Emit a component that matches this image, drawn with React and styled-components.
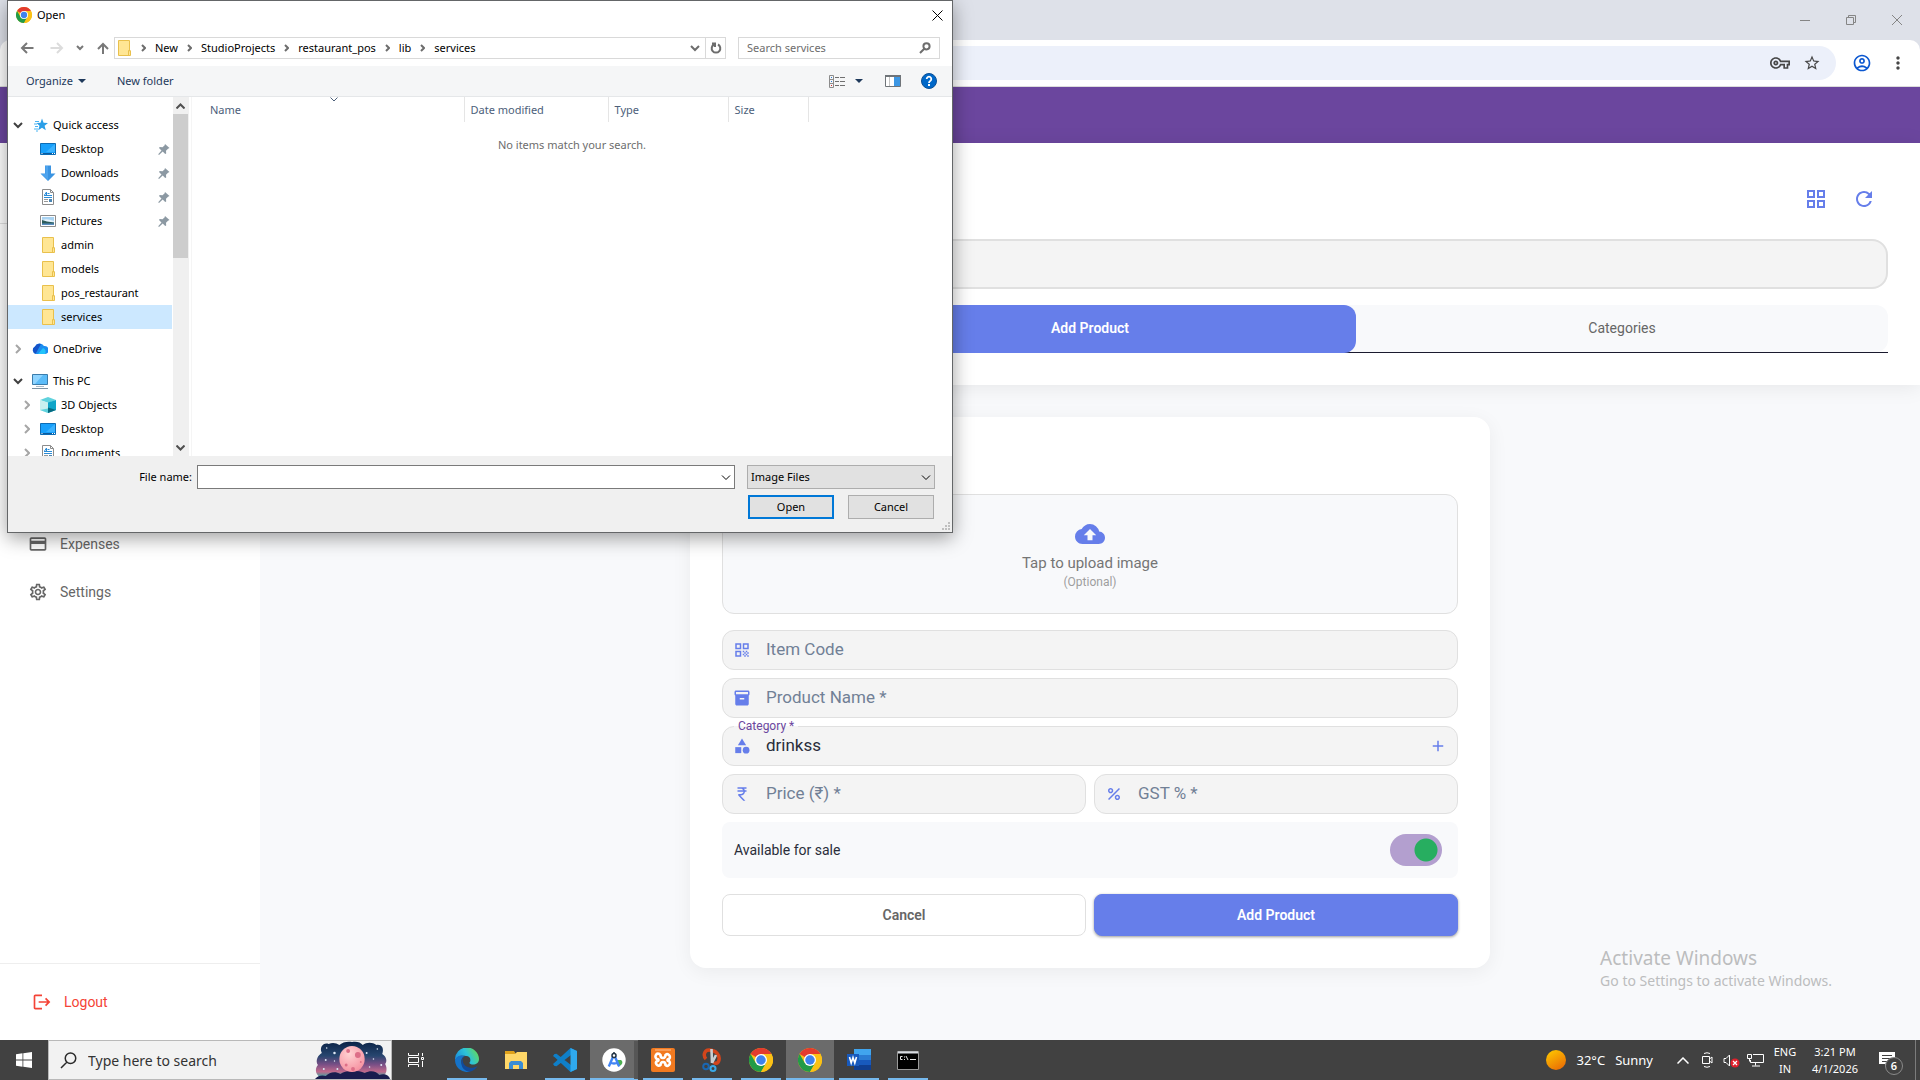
import React, { Component } from "react";
import styled, { createGlobalStyle } from "styled-components";
import {
  MdAdd,
  MdCategory,
  MdCloudUpload,
  MdCurrencyRupee,
  MdInventory2,
  MdLogout,
  MdMoreVert,
  MdOutlineAccountCircle,
  MdOutlineCreditCard,
  MdOutlineGridView,
  MdOutlineSettings,
  MdOutlineVpnKey,
  MdPercent,
  MdQrCode,
  MdRefresh,
  MdStarOutline,
} from "react-icons/md";

const Styles = {
  color: {
    primary: "#667eea",
    purple: "#6b469e",
    page: "#f8f9fb",
    field: "#f4f4f4",
    line: "#e0e0e0",
    muted: "#666666",
    hint: "#718096",
    dark: "#1a1a2e",
    text: "#2a2d3a",
    danger: "#f44336",
    accent: "#76b9ed",
    command: "#1e395b",
  },
  font: {
    app: `Roboto, "Noto Sans", sans-serif`,
    system: `"Noto Sans", "Open Sans", sans-serif`,
  },
};

const GlobalStyle = createGlobalStyle`
  * {
    box-sizing: border-box;
  }
  body {
    margin: 0;
    font-family: ${Styles.font.app};
  }
  button, input, select {
    font: inherit;
    color: inherit;
    margin: 0;
  }
  button {
    padding: 0;
    border: 0;
    background: none;
  }
  svg {
    display: block;
    flex-shrink: 0;
  }
  ul {
    list-style: none;
    margin: 0;
    padding: 0;
  }
`;

const Screen = styled.div`
  position: relative;
  display: flex;
  flex-direction: column;
  min-height: 100vh;
  overflow: hidden;
`;

/* browser */
const TabStrip = styled.div`
  display: flex;
  justify-content: flex-end;
  height: 40px;
  background: #dee1e9;
`;
const WindowButton = styled.button`
  display: flex;
  align-items: center;
  justify-content: center;
  width: 46px;
  height: 40px;
  color: #858585;
`;
const ToolbarBack = styled.div`
  background: #dee1e9;
`;
const BrowserToolbar = styled.div`
  display: flex;
  align-items: center;
  gap: 16px;
  height: 47px;
  padding: 0 12px;
  background: #fff;
  border-bottom: 1px solid #dcdcdc;
  border-radius: 10px 10px 0 0;
`;
const AddressBar = styled.div`
  flex: 1;
  display: flex;
  align-items: center;
  justify-content: flex-end;
  gap: 12px;
  height: 34px;
  padding-right: 14px;
  border-radius: 17px;
  background: #ecf0fa;
`;
const BrowserButton = styled.button`
  display: flex;
  align-items: center;
  justify-content: center;
  width: 20px;
  height: 24px;
  color: ${(props) => props.$color || "#474747"};
`;
const ProfileGroup = styled.div`
  display: flex;
  gap: 16px;
`;

/* pos page */
const AppBar = styled.header`
  height: 56px;
  background: ${Styles.color.purple};
`;
const Body = styled.div`
  flex: 1;
  display: flex;
`;
const Sidebar = styled.aside`
  display: flex;
  flex-direction: column;
  flex: 0 0 260px;
  background: #fff;
`;
const SidebarTop = styled.div`
  height: 81px;
  border-bottom: 1px solid ${Styles.color.line};
`;
const SideNav = styled.nav`
  flex: 1;
  padding: 296px 28px 0;
`;
const SideLink = styled.a`
  display: flex;
  align-items: center;
  gap: 12px;
  height: 48px;
  font-size: 14px;
  text-decoration: none;
  color: ${(props) => (props.$danger ? Styles.color.danger : Styles.color.muted)};
`;
const SidebarFoot = styled.div`
  padding: 14px 32px;
  border-top: 1px solid #eeeeee;
`;
const Main = styled.main`
  flex: 1;
  display: flex;
  flex-direction: column;
  background: ${Styles.color.page};
`;
const PageHeader = styled.section`
  padding: 32px;
  background: #fff;
  box-shadow: 0 2px 20px rgba(0, 0, 0, 0.08);
`;
const HeaderActions = styled.div`
  display: flex;
  justify-content: flex-end;
  gap: 8px;
  height: 64px;
  padding-top: 4px;
  color: ${Styles.color.primary};
`;
const RoundButton = styled.button`
  display: flex;
  align-items: center;
  justify-content: center;
  width: 40px;
  height: 40px;
  margin-right: ${(props) => (props.$last ? "4px" : "0")};
`;
const SearchInput = styled.input`
  display: block;
  width: 100%;
  height: 50px;
  padding: 0 16px;
  border: 2px solid ${Styles.color.line};
  border-radius: 16px;
  background: ${Styles.color.field};
`;
const Tabs = styled.div`
  display: flex;
  height: 48px;
  margin-top: 16px;
  border-radius: 12px 12px 0 0;
  background: linear-gradient(${Styles.color.dark}, ${Styles.color.dark}) bottom / 100% 1px no-repeat;
`;
const TabGroup = styled.div`
  flex: 1;
  display: flex;
  height: 47px;
  border-radius: 12px;
  background: ${Styles.color.page};
`;
const Tab = styled.button`
  flex: 1;
  height: 48px;
  padding-bottom: 2px;
  border-radius: 12px;
  font-size: 14px;
  font-weight: ${(props) => (props.$active ? 600 : 400)};
  color: ${(props) => (props.$active ? "#fff" : Styles.color.muted)};
  background: ${(props) => (props.$active ? Styles.color.primary : "transparent")};
`;
const Card = styled.form`
  align-self: center;
  display: flex;
  flex-direction: column;
  gap: 8px;
  width: 100%;
  max-width: 800px;
  margin: 32px 0;
  padding: 77px 32px 32px;
  border-radius: 16px;
  background: #fff;
  box-shadow: 0 4px 20px rgba(0, 0, 0, 0.06);
`;
const Upload = styled.button`
  display: flex;
  flex-direction: column;
  align-items: center;
  height: 120px;
  margin-bottom: 8px;
  padding-top: 24px;
  border: 1px solid ${Styles.color.line};
  border-radius: 12px;
  background: ${Styles.color.page};
  color: ${Styles.color.primary};
`;
const UploadText = styled.span`
  margin-top: 4px;
  font-size: 15px;
  line-height: 20px;
  color: #757575;
`;
const UploadHint = styled.span`
  font-size: 12px;
  line-height: 18px;
  color: #9e9e9e;
`;
const FieldRow = styled.div`
  display: flex;
  gap: 8px;
`;
const FieldBox = styled.div`
  position: relative;
  flex: 1;
  display: flex;
  align-items: center;
  gap: 15px;
  min-height: 40px;
  padding: 0 10px;
  border: 1px solid ${Styles.color.line};
  border-radius: 12px;
  background: ${Styles.color.field};
  color: ${Styles.color.primary};
`;
const FieldInput = styled.input`
  flex: 1;
  min-width: 0;
  height: 36px;
  padding: 0 0 2px;
  border: 0;
  outline: 0;
  background: transparent;
  font-size: 17px;
  color: ${Styles.color.text};
  &::placeholder {
    color: ${Styles.color.hint};
    opacity: 1;
  }
`;
const FieldSelect = styled(FieldInput)`
  appearance: none;
`;
const FloatingLabel = styled.label`
  position: absolute;
  top: -9px;
  left: 11px;
  padding: 0 4px;
  font-size: 12px;
  line-height: 16px;
  color: ${Styles.color.purple};
  background: linear-gradient(#fff 50%, ${Styles.color.field} 50%);
`;
const SwitchRow = styled.label`
  display: flex;
  align-items: center;
  justify-content: space-between;
  height: 56px;
  padding: 0 16px 0 12px;
  border-radius: 8px;
  font-size: 14px;
  color: ${Styles.color.text};
  background: ${Styles.color.page};
`;
const Switch = styled.input`
  appearance: none;
  width: 52px;
  height: 32px;
  border-radius: 16px;
  background: radial-gradient(circle at 36px 16px, #27ae60 11px, transparent 12px) #b39fcf;
`;
const FormButton = styled.button`
  flex: 1 0 0;
  height: 42px;
  border-radius: 8px;
  border: 1px solid ${(props) => (props.$primary ? Styles.color.primary : Styles.color.line)};
  font-size: 14px;
  font-weight: 600;
  color: ${(props) => (props.$primary ? "#fff" : Styles.color.muted)};
  background: ${(props) => (props.$primary ? Styles.color.primary : "#fff")};
  box-shadow: ${(props) => (props.$primary ? "0 1px 3px rgba(0, 0, 0, 0.4)" : "none")};
`;
const FormActions = styled(FieldRow)`
  margin-top: 8px;
`;

/* file dialog */
const Dialog = styled.section`
  position: absolute;
  top: 0;
  left: 7px;
  width: 946px;
  display: flex;
  flex-direction: column;
  border: 1px solid #646668;
  background: #fff;
  box-shadow: 0 5px 18px rgba(0, 0, 0, 0.38);
  font-family: ${Styles.font.system};
  font-size: 11px;
  line-height: 16px;
  color: #000;
`;
const DialogTitle = styled.div`
  display: flex;
  align-items: center;
  gap: 5px;
  height: 30px;
  padding: 0 7px 2px 8px;
`;
const CloseButton = styled.button`
  display: flex;
  align-items: center;
  justify-content: center;
  width: 16px;
  height: 16px;
  margin-left: auto;
`;
const DialogNav = styled.div`
  display: flex;
  align-items: center;
  height: 35px;
  padding: 0 12px 1px 0;
`;
const ArrowButton = styled.button`
  display: flex;
  justify-content: center;
  width: ${(props) => props.$width}px;
  color: ${(props) => props.$color || "#787878"};
`;
const PathBox = styled.div`
  flex: 1;
  display: flex;
  align-items: center;
  height: 22px;
  padding-left: 1px;
  border: 1px solid #d9d9d9;
`;
const Crumb = styled.button`
  line-height: 20px;
`;
const CrumbArrow = styled.span`
  display: flex;
  justify-content: center;
  width: 23px;
  color: #6d6d6d;
`;
const PathButton = styled.button`
  display: flex;
  align-items: center;
  justify-content: center;
  width: 20px;
  height: 20px;
  margin-left: ${(props) => (props.$first ? "auto" : "0")};
  border-left: ${(props) => (props.$line ? "1px solid #d9d9d9" : "0")};
  color: #6d6d6d;
`;
const DialogSearch = styled.div`
  display: flex;
  align-items: center;
  width: 202px;
  height: 22px;
  margin-left: 12px;
  padding: 0 8px;
  border: 1px solid #d9d9d9;
  color: #6d6d6d;
  input {
    flex: 1;
    min-width: 0;
    padding: 0;
    border: 0;
    outline: 0;
  }
  input::placeholder {
    color: #6d6d6d;
    opacity: 1;
  }
`;
const CommandBar = styled.div`
  display: flex;
  align-items: center;
  height: 31px;
  padding: 0 15px 0 18px;
  background: #f5f6f7;
  border-bottom: 1px solid #e5e7e9;
  color: ${Styles.color.command};
`;
const CommandButton = styled.button`
  display: flex;
  align-items: center;
  gap: 5px;
  margin-right: ${(props) => props.$space || 0}px;
`;
const CommandSpacer = styled.span`
  flex: 1;
`;
const DialogBody = styled.div`
  display: flex;
  height: 359px;
`;
const Tree = styled.ul`
  width: 164px;
  padding-top: 16px;
  overflow: hidden;
`;
const TreeItem = styled.li`
  margin-top: ${(props) => (props.$spaced ? "8px" : "0")};
`;
const TreeButton = styled.button`
  display: flex;
  align-items: center;
  width: 100%;
  height: 24px;
  padding-left: ${(props) => (props.$child ? "10px" : "1px")};
  background: ${(props) => (props.$selected ? "#cce8ff" : "transparent")};
`;
const TreeArrow = styled.span`
  display: flex;
  justify-content: center;
  width: 18px;
  margin-right: ${(props) => (props.$child ? "4px" : "5px")};
  color: ${(props) => (props.$open ? "#404040" : "#a6a6a6")};
`;
const TreeLabel = styled.span`
  flex: 1;
  margin-left: 5px;
  text-align: left;
`;
const PinSlot = styled.span`
  margin-right: 2px;
`;
const Scrollbar = styled.div`
  display: flex;
  flex-direction: column;
  width: 16px;
  margin-left: 1px;
  background: #f0f0f0;
  color: #505050;
`;
const ScrollArrow = styled.button`
  display: flex;
  align-items: center;
  justify-content: center;
  width: 15px;
  height: 17px;
  margin-top: ${(props) => (props.$end ? "auto" : "0")};
`;
const ScrollThumb = styled.div`
  width: 15px;
  height: 144px;
  background: #cdcdcd;
`;
const FileArea = styled.div`
  flex: 1;
  margin-left: 2px;
  border-left: 1px solid #f5f5f5;
`;
const FileTable = styled.table`
  width: 100%;
  table-layout: fixed;
  border-collapse: collapse;
`;
const ColumnHead = styled.th`
  position: relative;
  width: ${(props) => (props.$width ? `${props.$width}px` : "auto")};
  height: 25px;
  padding: 1px 0 0 ${(props) => (props.$first ? 18 : 6)}px;
  border-right: ${(props) => (props.$width ? "1px solid #e5e5e5" : "0")};
  font-weight: 400;
  text-align: left;
  color: #4c607a;
  svg {
    position: absolute;
    top: 0;
    left: 138px;
  }
`;
const EmptyCell = styled.td`
  height: 46px;
  padding: 0;
  text-align: center;
  color: #6d6d6d;
`;
const DialogFoot = styled.div`
  display: flex;
  flex-direction: column;
  gap: 6px;
  height: 76px;
  padding: 9px 17px 0 0;
  background: #f0f0f0;
`;
const FootRow = styled.div`
  display: flex;
  align-items: center;
  gap: 5px;
`;
const FootButtons = styled.div`
  display: flex;
  justify-content: flex-end;
  gap: 14px;
  padding-right: 1px;
`;
const FileLabel = styled.label`
  width: 184px;
  text-align: right;
`;
const Combo = styled.div`
  position: relative;
  flex: ${(props) => (props.$grow ? "1" : "0 0 188px")};
  margin-left: ${(props) => (props.$grow ? "0" : "7px")};
  input,
  select {
    display: block;
    width: 100%;
    height: 24px;
    padding: 0 3px;
    border: 1px solid ${(props) => (props.$grow ? "#7a7a7a" : "#adadad")};
    border-radius: 0;
    background: ${(props) => (props.$grow ? "#fff" : "#e1e1e1")};
    appearance: none;
  }
  svg {
    position: absolute;
    top: 10px;
    right: 4px;
  }
`;
const DialogButton = styled.button`
  width: 86px;
  height: 24px;
  border: ${(props) => (props.$default ? "2px solid #0078d7" : "1px solid #adadad")};
  background: #e1e1e1;
`;
const Grip = styled.svg`
  position: absolute;
  right: 2px;
  bottom: 2px;
`;

/* desktop */
const Watermark = styled.div`
  position: absolute;
  right: 88px;
  bottom: 89px;
  font-family: ${Styles.font.system};
  color: #bcbdbe;
`;
const WatermarkTitle = styled.div`
  font-size: 19px;
  line-height: 26px;
`;
const WatermarkText = styled.div`
  font-size: 14px;
  line-height: 20px;
`;
const Taskbar = styled.footer`
  display: flex;
  height: 40px;
  background: #414141;
  color: #fff;
  font-family: ${Styles.font.system};
`;
const StartButton = styled.button`
  display: flex;
  align-items: center;
  justify-content: center;
  width: 48px;
`;
const TaskSearch = styled.div`
  display: flex;
  align-items: center;
  width: 344px;
  height: 40px;
  padding-left: 11px;
  border: 1px solid #b9b9b9;
  background: #f2f2f2;
  color: #2b2b2b;
  input {
    flex: 1;
    min-width: 0;
    margin-left: 11px;
    padding: 0;
    border: 0;
    outline: 0;
    background: transparent;
    font-size: 14px;
  }
  input::placeholder {
    color: #333;
    opacity: 1;
  }
`;
const TaskList = styled.div`
  display: flex;
  gap: 1px;
  margin-left: 3px;
`;
const TaskButton = styled.button`
  display: flex;
  align-items: center;
  justify-content: center;
  width: 48px;
  height: 40px;
  background:
    linear-gradient(${Styles.color.accent}, ${Styles.color.accent}) bottom /
      ${(props) => (props.$idle ? "0" : props.$active ? "48px" : "40px")} 2px no-repeat,
    ${(props) => (props.$active ? "#6b6b6b" : "transparent")};
`;
const Stack = styled.span`
  display: flex;
  align-items: center;
  justify-content: center;
  width: 48px;
  height: 38px;
  border-right: 4px solid #565656;
  padding-left: 4px;
`;
const Tray = styled.div`
  display: flex;
  align-items: center;
  margin-left: auto;
`;
const Weather = styled.button`
  display: flex;
  align-items: center;
  gap: 10px;
  margin-right: 18px;
  font-size: 13px;
`;
const TrayButton = styled.button`
  display: flex;
  justify-content: center;
  width: 24px;
`;
const TrayText = styled.button`
  width: ${(props) => props.$width}px;
  font-size: 11px;
  line-height: 17px;
  text-align: center;
`;
const NoticeButton = styled.button`
  position: relative;
  width: 24px;
  height: 28px;
  margin-left: 12px;
`;
const Badge = styled.span`
  position: absolute;
  right: 0;
  bottom: -1px;
  width: 18px;
  height: 18px;
  border: 1px solid #8a8a8a;
  border-radius: 50%;
  background: #414141;
  font-size: 11px;
  line-height: 16px;
  font-weight: 600;
`;
const ShowDesktop = styled.button`
  width: 5px;
  height: 40px;
  margin-left: 12px;
  border-left: 1px solid #7c7c7c;
`;

const Stroke = ({ w, h, d, width = 1, ...rest }) => (
  <svg width={w} height={h} viewBox={`0 0 ${w} ${h}`} fill="none" stroke="currentColor" strokeWidth={width} {...rest}>
    <path d={d} />
  </svg>
);

const Caret = () => (
  <svg width="8" height="4" viewBox="0 0 8 4" fill="currentColor">
    <path d="M0 0h8L4 4z" />
  </svg>
);

const ChromeLogo = ({ size }) => (
  <svg width={size} height={size} viewBox="0 0 48 48">
    <circle cx="24" cy="24" r="24" fill="#fbc116" />
    <path d="M24 24 3.2 12A24 24 0 0 1 44.8 12H24z" fill="#e33b2e" />
    <path d="M3.2 12A24 24 0 0 0 24 48l10.4-18L24 24 13.6 30z" fill="#229b48" />
    <path d="M44.8 12A24 24 0 0 1 24 48l10.4-18L24 12z" fill="#fbc116" />
    <circle cx="24" cy="24" r="12" fill="#fff" />
    <circle cx="24" cy="24" r="9.5" fill="#3f82ee" />
  </svg>
);

const FolderIcon = () => (
  <svg width="16" height="16" viewBox="0 0 16 16">
    <path d="M2.5.5h11v10.500h1v4.500h-12z" fill="#ffe694" stroke="#e9c04c" />
    <path d="M12.5 15V10.5h2" fill="none" stroke="#e9c04c" />
  </svg>
);

const DesktopIcon = () => (
  <svg width="16" height="16" viewBox="0 0 16 16">
    <path d="M.5 2.500h15v11H.5z" fill="#18a0fb" stroke="#0c6cb5" />
    <path d="M6 11 15 3v8z" fill="#3bb2ff" />
    <path d="M1 12.5h14" stroke="#0a5a9c" />
    <path d="M1.5 12.5h1M12 12.5h1M14 12.5h1" stroke="#fff" />
  </svg>
);

const DownloadsIcon = () => (
  <svg width="16" height="16" viewBox="0 0 16 16">
    <path d="M5 .5h6v8h4.500L8 16 .5 8.500H5z" fill="#3a94e2" />
    <path d="M5.5 1H8v14L1.500 9h4z" fill="#4ea4ee" />
  </svg>
);

const DocumentsIcon = () => (
  <svg width="16" height="16" viewBox="0 0 16 16">
    <path d="M2.5.5h8l3 3v12h-11z" fill="#fff" stroke="#8c8c8c" />
    <path d="M10.5.5v3h3" fill="none" stroke="#8c8c8c" />
    <path d="M7.5 4.5h2M4 6.5h8M4 8.5h8" stroke="#2b8cd6" />
    <path d="m4.5 6 2-3v3" fill="none" stroke="#2b8cd6" />
    <path d="M4 10.5h4M4 12.5h4" stroke="#999" />
    <path d="M9 10h3v3H9z" fill="#4b86b4" />
  </svg>
);

const PicturesIcon = () => (
  <svg width="16" height="16" viewBox="0 0 16 16">
    <path d="M.5 2.500h15v11H.5z" fill="#fff" stroke="#8c8c8c" />
    <path d="M2 4h12v8H2z" fill="#a9d3f2" />
    <path d="M2 7q5-2 12 1v1H2z" fill="#e6f3fb" />
    <path d="M2 7l5 1.500 7 1V12H2z" fill="#2d5c5b" />
    <path d="M2 10.500h12V12H2z" fill="#5b8fc2" />
  </svg>
);

const StarIcon = () => (
  <svg width="16" height="16" viewBox="-2 -1 16 16">
    <path d="m8 .5 1.600 4.300 4.400.2-3.400 2.800 1.200 4.400L8 9.700l-3.800 2.600 1.300-4.500L2.500 5l4-.2z" fill="#2b9fe8" />
    <path d="M1 3.500h4M0 6h3M1 8.500h3M0 11h4M2 13h2" stroke="#4ab4f2" />
  </svg>
);

const OneDriveIcon = () => (
  <svg width="16" height="16" viewBox="0 0 16 16">
    <path d="M4 13a4 4 0 0 1-1-7.500A5 5 0 0 1 12 5a4 4 0 0 1 1 8z" fill="#1c8df0" />
    <path d="M4 13a4 4 0 0 1-1-7.500A5 5 0 0 1 9 3L3.500 12.900z" fill="#1552c8" />
    <path d="m6 13 5-6a4 4 0 0 1 2 6z" fill="#22c3fa" />
  </svg>
);

const ComputerIcon = () => (
  <svg width="16" height="16" viewBox="0 0 16 16">
    <path d="M.5 1.500h15v10H.5z" fill="#5cbcf8" stroke="#3b7cab" />
    <path d="M1 2h10L3 11H1z" fill="#8fd4ff" />
    <path d="M4 13.500h8" stroke="#a9bac6" />
    <path d="M0 15.500h16" stroke="#7d93a4" />
  </svg>
);

const CubeIcon = () => (
  <svg width="16" height="16" viewBox="0 0 16 16">
    <path d="M0 3 8 0l8 3-8 3z" fill="#5fd2dd" />
    <path d="M0 3l8 2.500V16l-8-3z" fill="#c9f0ef" />
    <path d="M16 3 8 5.500V16l8-3z" fill="#0fa5c8" />
    <path d="m8 10.500 8 2.500-8 3z" fill="#066a80" />
    <path d="m8 11.500-8 1.500 8 3z" fill="#5fd2dd" />
  </svg>
);

const PinIcon = () => (
  <svg width="12" height="12" viewBox="0 0 12 12" fill="#8c99a3">
    <path d="m7 1 4.500 4-1.500.8-2 2 .2 2.700-1 .5-2.500-2.500L1 12l-.8-.8L3.500 7.500 1 5l.7-1 2.800.2 2-1.800z" />
  </svg>
);

const tree = [
  { name: "Quick access", icon: <StarIcon />, open: true },
  { name: "Desktop", icon: <DesktopIcon />, child: true, pinned: true },
  { name: "Downloads", icon: <DownloadsIcon />, child: true, pinned: true },
  { name: "Documents", icon: <DocumentsIcon />, child: true, pinned: true },
  { name: "Pictures", icon: <PicturesIcon />, child: true, pinned: true },
  { name: "admin", icon: <FolderIcon />, child: true },
  { name: "models", icon: <FolderIcon />, child: true },
  { name: "pos_restaurant", icon: <FolderIcon />, child: true },
  { name: "services", icon: <FolderIcon />, child: true, selected: true },
  { name: "OneDrive", icon: <OneDriveIcon />, spaced: true, closed: true },
  { name: "This PC", icon: <ComputerIcon />, spaced: true, open: true },
  { name: "3D Objects", icon: <CubeIcon />, child: true, closed: true },
  { name: "Desktop", icon: <DesktopIcon />, child: true, closed: true },
  { name: "Documents", icon: <DocumentsIcon />, child: true, closed: true },
];

const crumbs = ["New", "StudioProjects", "restaurant_pos", "lib", "services"];

class FileDialog extends Component {
  render() {
    return (
      <Dialog role="dialog" aria-label="Open">
        <DialogTitle>
          <ChromeLogo size={16} />
          Open
          <CloseButton aria-label="Close">
            <Stroke w={11} h={11} d="M.5.5l10 10M10.5.5l-10 10" />
          </CloseButton>
        </DialogTitle>
        <DialogNav>
          <ArrowButton $width={38} aria-label="Back">
            <Stroke w={14} h={12} width={2} d="M13.5 6H2M7 1 2 6l5 5" />
          </ArrowButton>
          <ArrowButton $width={22} $color="#dcdcdc" aria-label="Forward">
            <Stroke w={14} h={12} width={2} d="M.5 6H12M7 1l5 5-5 5" />
          </ArrowButton>
          <ArrowButton $width={24} aria-label="Recent locations">
            <Stroke w={8} h={6} width={2} d="M1 1l3 3 3-3" />
          </ArrowButton>
          <ArrowButton $width={22} aria-label="Up">
            <Stroke w={12} h={12} width={2} d="M6 12V2M1 7l5-5 5 5" />
          </ArrowButton>
          <PathBox>
            <FolderIcon />
            {crumbs.map((name) => (
              <React.Fragment key={name}>
                <CrumbArrow>
                  <Stroke w={5} h={8} width={2} d="M1 1l3 3-3 3" />
                </CrumbArrow>
                <Crumb>{name}</Crumb>
              </React.Fragment>
            ))}
            <PathButton $first aria-label="Previous locations">
              <Stroke w={10} h={7} width={2} d="M1 1l4 4 4-4" />
            </PathButton>
            <PathButton $line aria-label="Refresh">
              <Stroke w={12} h={12} width={2} d="M8 2.500a4.300 4.300 0 1 1-4 0M2 1.500h3v3.500" />
            </PathButton>
          </PathBox>
          <DialogSearch>
            <input aria-label="Search services" placeholder="Search services" />
            <Stroke w={12} h={12} width={2} d="M1 11l4-4M7.500 1.200a3 3 0 1 1 0 6.200 3 3 0 0 1 0-6.200" />
          </DialogSearch>
        </DialogNav>
        <CommandBar>
          <CommandButton $space={31}>
            Organize
            <Caret />
          </CommandButton>
          <CommandButton>New folder</CommandButton>
          <CommandSpacer />
          <CommandButton $space={10} aria-label="Change your view">
            <svg width="16" height="13" viewBox="0 0 16 13" fill="none" stroke="#8c8c8c">
              <path d="M.5.5h4v12h-4zM.5 4.500h4M.5 8.500h4" />
              <path d="M6 2.500h4M11 2.500h5M6 6.500h4M11 6.500h5M6 10.500h4M11 10.500h5" stroke="#707070" />
              <path d="M2 2.500h1M2 6.500h1" stroke="#2b7cd3" />
              <path d="M2 10.500h1" stroke="#d32b2b" />
            </svg>
          </CommandButton>
          <CommandButton $space={22} aria-label="More view options">
            <Caret />
          </CommandButton>
          <CommandButton $space={20} aria-label="Show the preview pane">
            <svg width="16" height="12" viewBox="0 0 16 12">
              <path d="M.5.5h15v11H.5z" fill="#fff" stroke="#6f7479" />
              <path d="M0 1h16" stroke="#6f7479" strokeWidth="2" />
              <path d="M9 2h6v9H9z" fill="#3d97e4" />
              <path d="M4.500 2v9" stroke="#c4c4c4" />
            </svg>
          </CommandButton>
          <CommandButton aria-label="Help">
            <svg width="16" height="16" viewBox="0 0 16 16">
              <circle cx="8" cy="8" r="7.500" fill="#0068c9" stroke="#0b4f96" />
              <path d="M5.700 6a2.300 2.300 0 1 1 3.500 2C8.300 8.600 8 9 8 10" fill="none" stroke="#fff" strokeWidth="1.800" />
              <path d="M7 11h2v2H7z" fill="#fff" />
            </svg>
          </CommandButton>
        </CommandBar>
        <DialogBody>
          <Tree>
            {tree.map((item, i) => (
              <TreeItem key={i} $spaced={item.spaced}>
                <TreeButton $child={item.child} $selected={item.selected}>
                  <TreeArrow $child={item.child} $open={item.open}>
                    {item.open && <Stroke w={10} h={7} width={2} d="M1 1l4 4 4-4" />}
                    {item.closed && <Stroke w={6} h={10} width={2} d="M1 1l4 4-4 4" />}
                  </TreeArrow>
                  {item.icon}
                  <TreeLabel>{item.name}</TreeLabel>
                  {item.pinned && <PinSlot><PinIcon /></PinSlot>}
                </TreeButton>
              </TreeItem>
            ))}
          </Tree>
          <Scrollbar>
            <ScrollArrow aria-label="Scroll up">
              <Stroke w={9} h={6} width={2} d="M.5 5.500l4-4 4 4" />
            </ScrollArrow>
            <ScrollThumb />
            <ScrollArrow $end aria-label="Scroll down">
              <Stroke w={9} h={6} width={2} d="M.5.5l4 4 4-4" />
            </ScrollArrow>
          </Scrollbar>
          <FileArea>
            <FileTable>
              <thead>
                <tr>
                  <ColumnHead $first $width={272}>
                    Name
                    <Stroke w={8} h={5} d="M.5.5 4 4 7.500.5" />
                  </ColumnHead>
                  <ColumnHead $width={144}>Date modified</ColumnHead>
                  <ColumnHead $width={120}>Type</ColumnHead>
                  <ColumnHead $width={80}>Size</ColumnHead>
                  <ColumnHead as="td" />
                </tr>
              </thead>
              <tbody>
                <tr>
                  <EmptyCell colSpan={5}>No items match your search.</EmptyCell>
                </tr>
              </tbody>
            </FileTable>
          </FileArea>
        </DialogBody>
        <DialogFoot>
          <FootRow>
            <FileLabel htmlFor="file-name">File name:</FileLabel>
            <Combo $grow>
              <input id="file-name" type="text" />
              <Stroke w={10} h={6} d="M1 .5l4 4 4-4" />
            </Combo>
            <Combo>
              <select aria-label="File type">
                <option>Image Files</option>
              </select>
              <Stroke w={10} h={6} d="M1 .5l4 4 4-4" />
            </Combo>
          </FootRow>
          <FootButtons>
            <DialogButton $default>Open</DialogButton>
            <DialogButton>Cancel</DialogButton>
          </FootButtons>
        </DialogFoot>
        <Grip width="8" height="8" viewBox="0 0 8 8" fill="#bfbfbf">
          <path d="M6 0h2v2H6zM3 3h2v2H3zM6 3h2v2H6zM0 6h2v2H0zM3 6h2v2H3zM6 6h2v2H6z" />
        </Grip>
      </Dialog>
    );
  }
}

class ProductForm extends Component {
  render() {
    return (
      <Card onSubmit={(e) => e.preventDefault()}>
        <Upload type="button">
          <MdCloudUpload size={30} />
          <UploadText>Tap to upload image</UploadText>
          <UploadHint>(Optional)</UploadHint>
        </Upload>
        <FieldBox>
          <MdQrCode size={18} />
          <FieldInput aria-label="Item Code" placeholder="Item Code" />
        </FieldBox>
        <FieldBox>
          <MdInventory2 size={18} />
          <FieldInput aria-label="Product Name" placeholder="Product Name *" />
        </FieldBox>
        <FieldBox>
          <FloatingLabel htmlFor="category">Category *</FloatingLabel>
          <MdCategory size={18} />
          <FieldSelect as="select" id="category">
            <option>drinkss</option>
          </FieldSelect>
          <button type="button" aria-label="Add category"><MdAdd size={18} /></button>
        </FieldBox>
        <FieldRow>
          <FieldBox>
            <MdCurrencyRupee size={18} />
            <FieldInput aria-label="Price" placeholder="Price (₹) *" />
          </FieldBox>
          <FieldBox>
            <MdPercent size={18} />
            <FieldInput aria-label="GST" placeholder="GST % *" />
          </FieldBox>
        </FieldRow>
        <SwitchRow>
          Available for sale
          <Switch type="checkbox" role="switch" defaultChecked />
        </SwitchRow>
        <FormActions>
          <FormButton type="button">Cancel</FormButton>
          <FormButton $primary>Add Product</FormButton>
        </FormActions>
      </Card>
    );
  }
}

const MoonArt = () => (
  <svg width="76" height="38" viewBox="0 0 78 38" preserveAspectRatio="none">
    <defs>
      <linearGradient id="sky" x1="0" y1="0" x2="0" y2="1">
        <stop offset="0" stopColor="#0b2347" />
        <stop offset=".4" stopColor="#27466f" />
        <stop offset=".65" stopColor="#7a4f86" />
        <stop offset=".85" stopColor="#c06a8c" />
        <stop offset="1" stopColor="#3aa7a4" />
      </linearGradient>
      <radialGradient id="moon" cx=".4" cy=".3" r=".8">
        <stop offset="0" stopColor="#ffd3d3" />
        <stop offset="1" stopColor="#f58a9b" />
      </radialGradient>
    </defs>
    <path d="M7 12C4 6 9 1 14 3c4-2 8-1 11 1 3-3 9-4 13-3 4-1 9 0 11 3 4-3 10-3 14 0 6-1 8 4 6 9 5 3 5 8 3 10 3 5 1 11-3 13H5C0 33 0 27 3 24c-3-4 0-10 4-12z" fill="url(#sky)" />
    <path d="M0 38c3-4 8-4 11-3 4-4 10-5 15-2 6-4 18-4 25-1 6-3 12-2 15 2 5-2 10 0 11 4z" fill="#191d4e" />
    <circle cx="38" cy="18" r="13" fill="url(#moon)" />
    <g fill="#dd6f88">
      <circle cx="34" cy="10" r="2" />
      <circle cx="44" cy="14" r="3" />
      <circle cx="32" cy="24" r="1.500" />
      <circle cx="39" cy="28" r="2" />
      <circle cx="47" cy="21" r="1" />
    </g>
    <g fill="#dfe9f5">
      <circle cx="12" cy="7" r=".8" />
      <circle cx="20" cy="12" r="1.300" />
      <circle cx="11" cy="19" r="1" />
      <circle cx="9" cy="28" r="1" />
      <circle cx="23" cy="28" r="1" />
      <circle cx="20" cy="20" r=".7" />
      <circle cx="53" cy="12" r="1" />
      <circle cx="64" cy="8" r=".8" />
      <circle cx="60" cy="18" r=".8" />
      <circle cx="68" cy="24" r="1" />
      <circle cx="56" cy="26" r=".8" />
    </g>
  </svg>
);

const EdgeLogo = () => (
  <svg width="24" height="24" viewBox="0 0 24 24">
    <defs>
      <linearGradient id="edge" x1="0" y1=".6" x2="1" y2=".2">
        <stop offset="0" stopColor="#1b8fdd" />
        <stop offset=".5" stopColor="#2dc3d8" />
        <stop offset="1" stopColor="#69dc4f" />
      </linearGradient>
    </defs>
    <path d="M0 12A12 12 0 0 1 24 11c0 4-3 5.500-6 5.500-2 0-3.600-.6-3.600-1.500 0-.7 1-1 1-3A4 4 0 0 0 11 8C5 7 1 9 0 13z" fill="url(#edge)" />
    <path d="M0 12.500C1 8 6 6.500 10 8c-3 1-4.300 4-3.500 7 1 4.500 4.500 8 9 8.500A12 12 0 0 1 0 12.500z" fill="#1573c9" />
    <path d="M10 8c-3.500 2-3 8 1.500 10.500 4 2.200 8 1.500 11-.5-1.500 3-4.500 5-8 5.700C8 23 5 17 7 11.500 7.600 9.500 9 8.300 10 8z" fill="#124a9a" />
  </svg>
);

const ExplorerLogo = () => (
  <svg width="22" height="19" viewBox="0 0 22 19">
    <path d="M0 0h9l2 3H0z" fill="#e0a21b" />
    <path d="M0 3h10l2-2h10v17H0z" fill="#ffd768" />
    <path d="M4 18v-6l2-2h10l2 2v6h-4v-4H8v4z" fill="#3a8dd4" />
  </svg>
);

const CodeLogo = () => (
  <svg width="24" height="24" viewBox="0 0 24 24">
    <path d="M17.500 0 24 3v18l-6.500 3L2 9.500 0 8l1.500-2 2-.2L18 17V7L3.500 18.300l-2-.3L0 16l2-1.700z" fill="#0f7fc8" />
    <path d="M17.500 0 24 3v18l-6.500 3z" fill="#2fa9ee" />
  </svg>
);

const StudioLogo = () => (
  <svg width="24" height="24" viewBox="0 0 24 24">
    <circle cx="12" cy="12" r="11.700" fill="#fff" />
    <path d="M14 12h5a3 3 0 0 1-4 5z" fill="#4caf50" />
    <path d="m11.800 7-5 11.500M12.200 7l5 11.500M8 14.500q4 2 8 0" stroke="#4285f4" strokeWidth="2.400" fill="none" />
    <circle cx="12" cy="7.500" r="2" fill="#fff" stroke="#233444" strokeWidth="1.500" />
    <path d="M12 4v2" stroke="#233444" strokeWidth="1.500" />
  </svg>
);

const XamppLogo = () => (
  <svg width="24" height="24" viewBox="0 0 24 24">
    <rect width="24" height="24" rx="2" fill="#f27a20" />
    <path d="M4 2h16" stroke="#ffc08f" />
    <path
      d="M8.500 6A2.500 2.500 0 0 0 6 11c2 0 2 2 0 2a2.500 2.500 0 1 0 3.500 4c0-2 1-3 2.500-3s2.500 1 2.500 3A2.500 2.500 0 1 0 18 13c-2 0-2-2 0-2a2.500 2.500 0 1 0-3.500-4c0 2-1 3-2.500 3S9.500 9 9.500 7z"
      fill="none"
      stroke="#fff"
      strokeWidth="2.600"
    />
  </svg>
);

const SnipLogo = () => (
  <svg width="20" height="24" viewBox="0 0 20 24" fill="none">
    <path d="M4 11C1 8 2 2 7 2c7 0 11 5 10 10-1 4-4 4-5 2" stroke="#d3451b" strokeWidth="3.500" />
    <path d="m9.500 1 .5 14M14 7l-4 8" stroke="#c9ced2" strokeWidth="2.600" />
    <circle cx="4" cy="18.500" r="2.800" stroke="#1a67b2" strokeWidth="2" />
    <circle cx="11" cy="20.500" r="2.500" stroke="#3aa8e6" strokeWidth="2" />
  </svg>
);

const WordLogo = () => (
  <svg width="24" height="22" viewBox="0 0 24 22">
    <path d="M7 0h17v6H7z" fill="#41a5ee" />
    <path d="M7 6h17v5H7z" fill="#2b7cd3" />
    <path d="M7 11h17v5H7z" fill="#185abd" />
    <path d="M7 16h17v5H7z" fill="#103f91" />
    <rect y="5" width="12" height="12" fill="#185abd" />
    <path d="m2.500 8 1.700 6L6 8.500 7.800 14l1.700-6" fill="none" stroke="#fff" strokeWidth="1.600" />
  </svg>
);

const ConsoleLogo = () => (
  <svg width="22" height="19" viewBox="0 0 22 19">
    <path d="M.5.5h21v18H.5z" fill="#000" stroke="#9a9a9a" />
    <path d="M1 1.500h20" stroke="#d8dce2" strokeWidth="2" />
    <path d="M5.500 5.500H3.500v3h2M7.500 5.500v1M7.500 8v1M9 5l2 4M13 8.500h6" stroke="#e6e6e6" fill="none" />
  </svg>
);

const tasks = [
  { name: "Microsoft Edge", icon: <EdgeLogo /> },
  { name: "File Explorer", icon: <ExplorerLogo />, idle: true },
  { name: "Visual Studio Code", icon: <CodeLogo /> },
  { name: "Android Studio", icon: <Stack><StudioLogo /></Stack>, active: true },
  { name: "XAMPP", icon: <XamppLogo /> },
  { name: "Snipping Tool", icon: <SnipLogo /> },
  { name: "Chrome", icon: <ChromeLogo size={24} /> },
  { name: "Chrome window", icon: <ChromeLogo size={24} />, active: true },
  { name: "Word", icon: <WordLogo /> },
  { name: "Command Prompt", icon: <ConsoleLogo /> },
];

class WindowsTaskbar extends Component {
  render() {
    return (
      <Taskbar>
        <StartButton aria-label="Start">
          <svg width="16" height="16" viewBox="0 0 16 16" fill="#fff">
            <path d="M0 2.200 6.500 1.300v6.300H0zM7.300 1.200 16 0v7.600H7.300zM0 8.400h6.500v6.300L0 13.800zM7.300 8.400H16V16l-8.700-1.200z" />
          </svg>
        </StartButton>
        <TaskSearch>
          <Stroke w={17} h={17} width={1.5} d="M1 16l6-6M10.500 1a5 5 0 1 1 0 10.500 5 5 0 0 1 0-10.500" />
          <input aria-label="Type here to search" placeholder="Type here to search" />
          <MoonArt />
        </TaskSearch>
        <StartButton aria-label="Task View">
          <Stroke w={16} h={16} d="M.5 1v2.500h10V1M.5 5.500h10v5H.5zM.5 15v-2.500h10V15M14.500 1v3M14.500 9v6M13.500 5.500h2v2h-2z" />
        </StartButton>
        <TaskList>
          {tasks.map((task) => (
            <TaskButton key={task.name} $idle={task.idle} $active={task.active} aria-label={task.name}>
              {task.icon}
            </TaskButton>
          ))}
        </TaskList>
        <Tray>
          <Weather>
            <svg width="20" height="20" viewBox="0 0 20 20">
              <defs>
                <linearGradient id="sun" x1=".2" y1="0" x2=".8" y2="1">
                  <stop offset="0" stopColor="#fdc500" />
                  <stop offset="1" stopColor="#ea6a05" />
                </linearGradient>
              </defs>
              <circle cx="10" cy="10" r="10" fill="url(#sun)" />
            </svg>
            <span>32°C</span>
            <span>Sunny</span>
          </Weather>
          <TrayButton aria-label="Show hidden icons">
            <Stroke w={12} h={7} width={1.5} d="M.5 6.500 6 1l5.500 5.500" />
          </TrayButton>
          <TrayButton aria-label="Meet Now">
            <Stroke w={12} h={16} d="M3 1.500q3-1.500 6 0M3 14.500q3 1.500 6 0M1.500 4.500h7v7h-7zM8.500 7l2.500-2v6L8.500 9" />
          </TrayButton>
          <TrayButton aria-label="Volume">
            <svg width="17" height="15" viewBox="0 0 17 15" fill="none" stroke="#fff">
              <path d="M1 5.500h2L6.500 2v11L3 9.500H1z" />
              <circle cx="12" cy="10" r="4.500" fill="#e0202c" stroke="none" />
              <path d="m10 8 4 4M14 8l-4 4" strokeWidth="1.200" />
            </svg>
          </TrayButton>
          <TrayButton aria-label="Network">
            <Stroke w={17} h={14} d="M.5 1.500h4v4h-4zM6 1.500h10.500v8h-13V7M2.500 5.500v3M8.500 9.500v3M5 13h8" />
          </TrayButton>
          <TrayText $width={36}>ENG<br />IN</TrayText>
          <TrayText $width={64}>3:21 PM<br />4/1/2026</TrayText>
          <NoticeButton aria-label="Notifications">
            <svg width="16" height="16" viewBox="0 0 16 16">
              <path d="M0 0h16v12H9l-3 3.500V12H0z" fill="#fff" />
              <path d="M3 3.500h10M3 6.500h10M3 9.500h6" stroke="#414141" />
            </svg>
            <Badge>6</Badge>
          </NoticeButton>
          <ShowDesktop aria-label="Show desktop" />
        </Tray>
      </Taskbar>
    );
  }
}

export default class App extends Component {
  render() {
    return (
      <Screen>
        <GlobalStyle />
        <TabStrip>
          <WindowButton aria-label="Minimize">
            <Stroke w={10} h={10} d="M0 5.500h10" />
          </WindowButton>
          <WindowButton aria-label="Restore">
            <Stroke w={10} h={10} d="M.5 2.500h7v7h-7zM2.500 2.500v-2h7v7h-2" />
          </WindowButton>
          <WindowButton aria-label="Close window">
            <Stroke w={10} h={10} d="M0 0l10 10M10 0 0 10" />
          </WindowButton>
        </TabStrip>
        <ToolbarBack>
          <BrowserToolbar>
            <AddressBar>
              <BrowserButton aria-label="Passwords"><MdOutlineVpnKey size={20} /></BrowserButton>
              <BrowserButton aria-label="Bookmark"><MdStarOutline size={18} /></BrowserButton>
            </AddressBar>
            <ProfileGroup>
              <BrowserButton $color="#0b57d0" aria-label="Profile"><MdOutlineAccountCircle size={20} /></BrowserButton>
              <BrowserButton aria-label="Menu"><MdMoreVert size={20} /></BrowserButton>
            </ProfileGroup>
          </BrowserToolbar>
        </ToolbarBack>
        <AppBar />
        <Body>
          <Sidebar>
            <SidebarTop />
            <SideNav>
              <SideLink href="#expenses"><MdOutlineCreditCard size={20} />Expenses</SideLink>
              <SideLink href="#settings"><MdOutlineSettings size={20} />Settings</SideLink>
            </SideNav>
            <SidebarFoot>
              <SideLink $danger href="#logout"><MdLogout size={20} />Logout</SideLink>
            </SidebarFoot>
          </Sidebar>
          <Main>
            <PageHeader>
              <HeaderActions>
                <RoundButton aria-label="Grid view"><MdOutlineGridView size={24} /></RoundButton>
                <RoundButton $last aria-label="Reload"><MdRefresh size={24} /></RoundButton>
              </HeaderActions>
              <SearchInput type="search" aria-label="Search products" />
              <Tabs>
                <TabGroup>
                  <Tab aria-label="Products" />
                  <Tab $active>Add Product</Tab>
                  <Tab>Categories</Tab>
                </TabGroup>
              </Tabs>
            </PageHeader>
            <ProductForm />
          </Main>
        </Body>
        <WindowsTaskbar />
        <Watermark>
          <WatermarkTitle>Activate Windows</WatermarkTitle>
          <WatermarkText>Go to Settings to activate Windows.</WatermarkText>
        </Watermark>
        <FileDialog />
      </Screen>
    );
  }
}
